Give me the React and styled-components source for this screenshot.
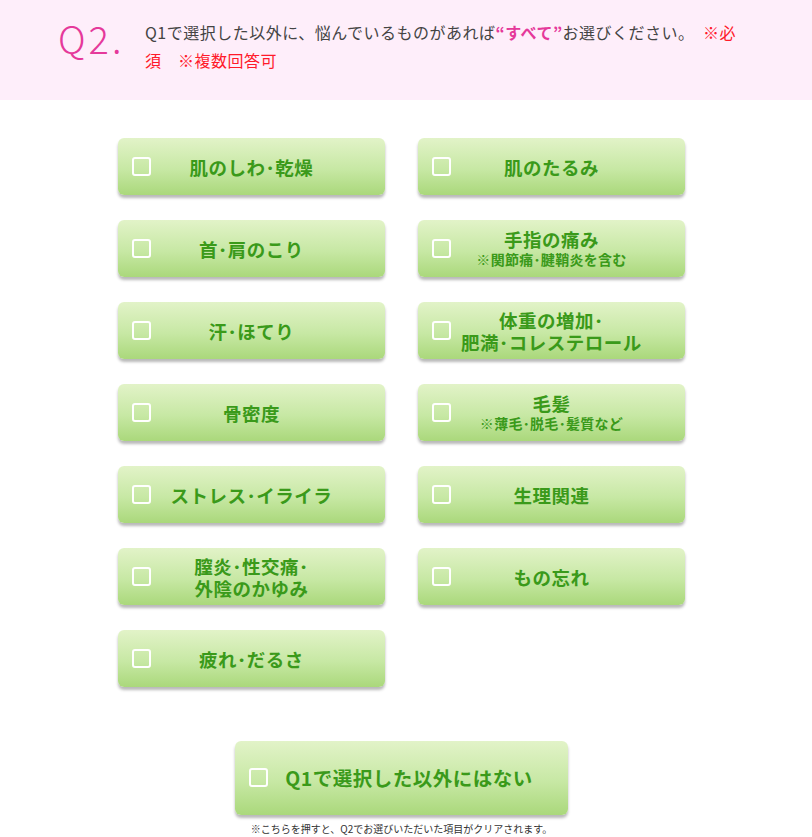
import styled, { createGlobalStyle } from 'styled-components';

const GlobalStyle = createGlobalStyle`
	body {
		margin: 0;
		background: #fff;
		font-family: 'Noto Sans CJK JP', 'Noto Sans', sans-serif;
	}
`;

const Header = styled.header`
	display: flex;
	align-items: flex-start;
	height: 100px;
	box-sizing: border-box;
	padding: 14px 0 0 58px;
	background-color: #feeefa;
`;

const QNum = styled.div`
	width: 87px;
	flex-shrink: 0;
	font-size: 38px;
	font-weight: 300;
	line-height: 48px;
	letter-spacing: 3px;
	color: #e5399a;
`;

const QText = styled.p`
	margin: 4px 0 0;
	width: 606px;
	font-size: 16px;
	line-height: 28px;
	letter-spacing: 0.5px;
	color: #444;
	& b {
		color: #e5399a;
		font-weight: 700;
	}
	& em {
		font-style: normal;
		color: #ff1a2a;
	}
`;

const Main = styled.main`
	display: flex;
	flex-direction: column;
	align-items: center;
	padding: 38px 9px 0 0;
`;

const Grid = styled.div`
	display: grid;
	grid-template-columns: 267px 267px;
	grid-auto-rows: 57px;
	column-gap: 33px;
	row-gap: 25px;
`;

const Choice = styled.label`
	position: relative;
	display: flex;
	align-items: center;
	justify-content: center;
	height: ${(props) => (props.$big ? '74px' : '57px')};
	width: ${(props) => (props.$big ? '333px' : 'auto')};
	box-sizing: border-box;
	padding-left: ${(props) => (props.$big ? '15px' : '0')};
	border-radius: 6px;
	background: linear-gradient(to bottom, #e2f3c8 0%, #c7e8a4 55%, #aad87b 100%);
	box-shadow: 0 3px 3px rgba(0, 0, 0, 0.28);
	color: #3a9a1a;
	text-align: center;
	cursor: pointer;
`;

const Box = styled.span`
	position: absolute;
	left: 14px;
	top: 50%;
	width: 19px;
	height: 19px;
	margin-top: -10px;
	box-sizing: border-box;
	border: 2px solid #fff;
	border-radius: 3px;
`;

const Label = styled.span`
	display: flex;
	flex-direction: column;
	font-size: ${(props) => (props.$big ? '19.5px' : '18.5px')};
	font-weight: 700;
	line-height: 22px;
	letter-spacing: 0.5px;
	& small {
		font-size: 14px;
		line-height: 19px;
		letter-spacing: 0.3px;
	}
`;

const Spacer = styled.div`
	height: 54px;
`;

const Note = styled.p`
	margin: 8px 0 0;
	font-size: 10px;
	line-height: 12px;
	color: #333;
`;

const items = [
	['肌のしわ･乾燥'],
	['肌のたるみ'],
	['首･肩のこり'],
	['手指の痛み', '※関節痛･腱鞘炎を含む'],
	['汗･ほてり'],
	['体重の増加･', '肥満･コレステロール', true],
	['骨密度'],
	['毛髪', '※薄毛･脱毛･髪質など'],
	['ストレス･イライラ'],
	['生理関連'],
	['膣炎･性交痛･', '外陰のかゆみ', true],
	['もの忘れ'],
	['疲れ･だるさ'],
];

export default function App() {
	return (
		<>
			<GlobalStyle />
			<Header>
				<QNum>Q2.</QNum>
				<QText>
					Q1で選択した以外に、悩んでいるものがあれば<b>“すべて”</b>お選びください。
					<em>　※必須　※複数回答可</em>
				</QText>
			</Header>
			<Main>
				<Grid>
					{items.map(([main, sub, sameSize]) => (
						<Choice key={main}>
							<Box />
							<Label>
								<span>{main}</span>
								{sub && (sameSize ? <span>{sub}</span> : <small>{sub}</small>)}
							</Label>
						</Choice>
					))}
				</Grid>
				<Spacer />
				<Choice $big>
					<Box />
					<Label $big>Q1で選択した以外にはない</Label>
				</Choice>
				<Note>※こちらを押すと、Q2でお選びいただいた項目がクリアされます。</Note>
			</Main>
		</>
	);
}
